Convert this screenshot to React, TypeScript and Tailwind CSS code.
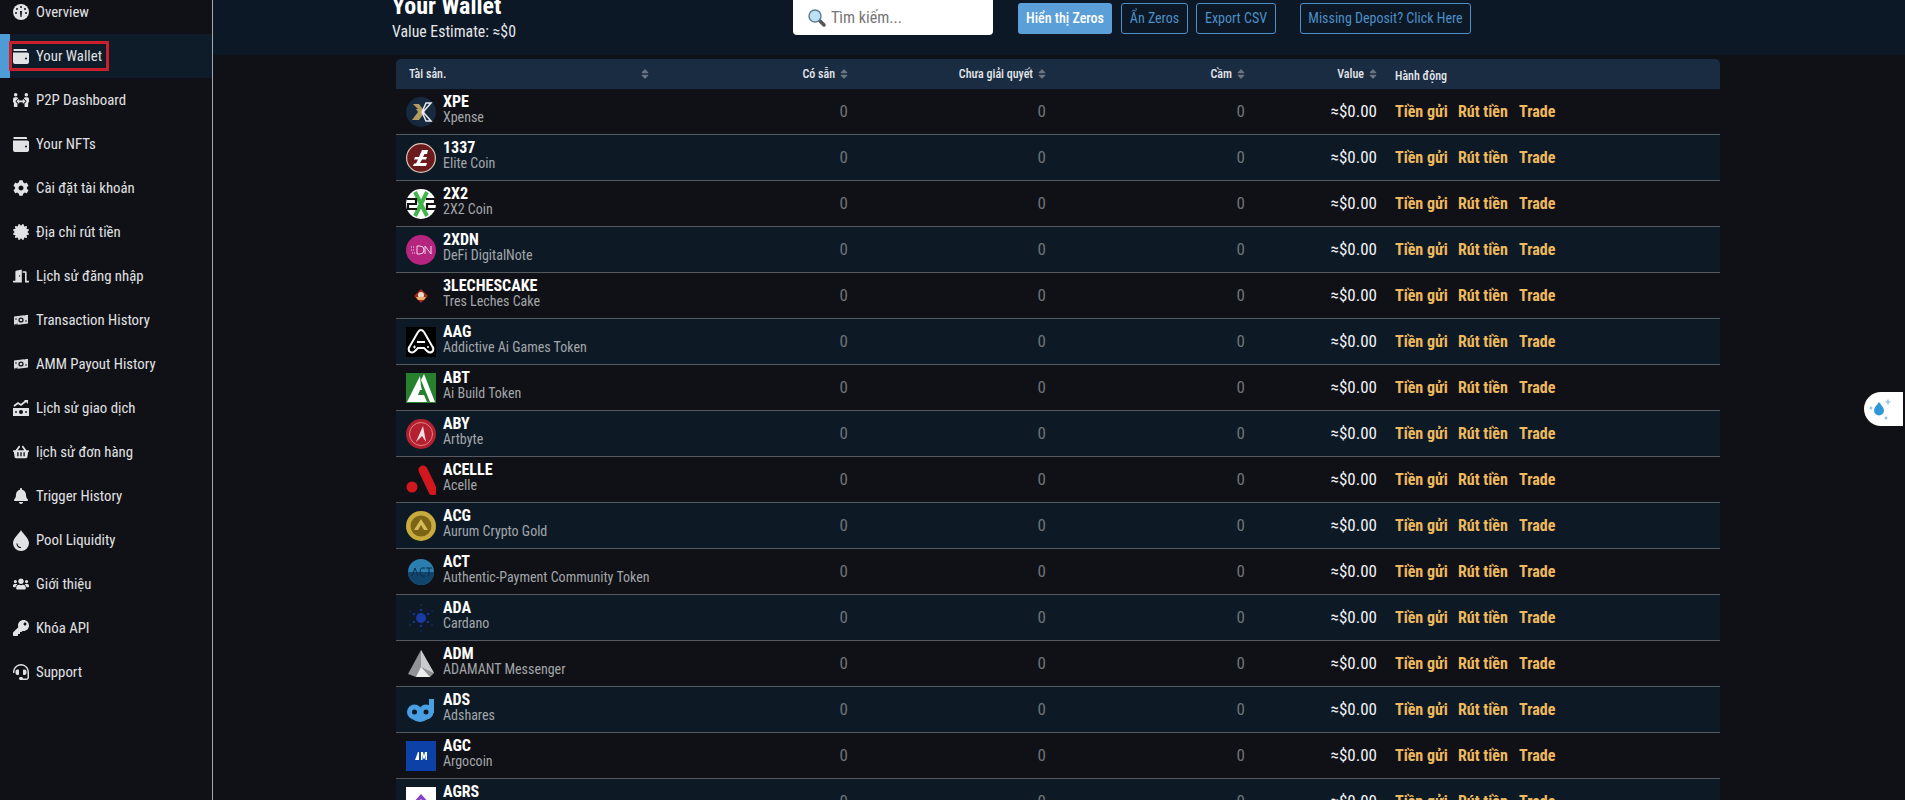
import React from "react";
import { FaCog, FaCertificate, FaDoorOpen, FaShoppingBasket, FaBell, FaUsers, FaKey, FaHeadset, FaPeopleArrows, FaSort } from "react-icons/fa";

const Gauge = () => (
  <svg width="16" height="16" viewBox="0 0 16 16"><circle cx="8" cy="8" r="8" fill="#e1e2e4"/><path d="M7 7h2l-.4 5.500a.6.600 0 01-1.200 0z" fill="#101117"/><circle cx="8" cy="3" r="1" fill="#101117"/><circle cx="4" cy="5" r="1" fill="#101117"/><circle cx="12" cy="5" r="1" fill="#101117"/><circle cx="3" cy="9" r="1" fill="#101117"/><circle cx="13" cy="9" r="1" fill="#101117"/></svg>
);
const Wallet = () => (
  <svg width="16" height="15" viewBox="0 0 16 15"><path d="M2 0h11a1 1 0 011 1v1H1a1 1 0 011-2z" fill="#e1e2e4"/><path d="M0 3.500a1.500 1.500 0 000 0V13a2 2 0 002 2h12a2 2 0 002-2V5a1.500 1.500 0 00-1.500-1.500z" fill="#e1e2e4"/><circle cx="13" cy="9.500" r="1" fill="#101117"/></svg>
);
const Bill = () => (
  <svg width="16" height="12" viewBox="0 0 16 12"><path d="M1 2.500L15 0.800v8.700L1 11.200z" fill="#d8d9db"/><circle cx="8" cy="6" r="2.600" fill="#101117"/><circle cx="8" cy="6" r="1.300" fill="#d8d9db"/><path d="M11 1l4-1M1 11l4-1" stroke="#101117" strokeWidth=".8"/><circle cx="3" cy="5" r=".8" fill="#101117"/><circle cx="13" cy="7" r=".8" fill="#101117"/></svg>
);
const TradeBill = () => (
  <svg width="16" height="16" viewBox="0 0 16 16"><path d="M1 6l4-3 3 2 5-4" fill="none" stroke="#e1e2e4" strokeWidth="1.800"/><path d="M11 0h4v4z" fill="#e1e2e4"/><rect x="0" y="8" width="16" height="8" fill="#e1e2e4"/><circle cx="8" cy="12" r="2" fill="#101117"/><circle cx="3" cy="12" r=".9" fill="#101117"/><circle cx="13" cy="12" r=".9" fill="#101117"/></svg>
);
const Drop = () => (
  <svg width="16" height="21" viewBox="0 0 16 21"><path d="M8 0c1 3 8 8 8 13a8 8 0 01-16 0C0 8 7 3 8 0z" fill="#e1e2e4"/><path d="M4 13.500c0 2.500 2 4 4 4" fill="none" stroke="#101117" strokeWidth="1.200"/></svg>
);

const nav: [React.ReactNode, string][] = [
  [<Gauge />, "Overview"],
  [<Wallet />, "Your Wallet"],
  [<FaPeopleArrows />, "P2P Dashboard"],
  [<Wallet />, "Your NFTs"],
  [<FaCog />, "Cài đặt tài khoản"],
  [<FaCertificate />, "Địa chỉ rút tiền"],
  [<FaDoorOpen />, "Lịch sử đăng nhập"],
  [<Bill />, "Transaction History"],
  [<Bill />, "AMM Payout History"],
  [<TradeBill />, "Lịch sử giao dịch"],
  [<FaShoppingBasket />, "lịch sử đơn hàng"],
  [<FaBell />, "Trigger History"],
  [<Drop />, "Pool Liquidity"],
  [<FaUsers />, "Giới thiệu"],
  [<FaKey />, "Khóa API"],
  [<FaHeadset />, "Support"],
];

const coins: [string, string, React.ReactNode][] = [
  ["XPE", "Xpense", <svg viewBox="0 0 30 30"><circle cx="15" cy="15" r="15" fill="#16293f"/><path d="M7 7h6l6 8-6 8H6l6-8-2-3h2z" fill="#b39b62"/><path d="M25 6l-8 9 8 9h-5l-4-9 4-9z" fill="none" stroke="#e8edf2" strokeWidth="1.500"/></svg>],
  ["1337", "Elite Coin", <svg viewBox="0 0 30 30"><circle cx="15" cy="15" r="14.400" fill="#6b1a1e" stroke="#d9c4b4" strokeWidth="1.200"/><path d="M22 7h-6l-3 7h-4l-1 2.500h4l-2 4H8l-1 2.500h13l1-3h-7l2-3.500h4l1-2.500h-4l1.500-3H21z" fill="#fff"/></svg>],
  ["2X2", "2X2 Coin", <svg viewBox="0 0 30 30"><circle cx="15" cy="15" r="15" fill="#fff"/><path d="M9 3l12 24M21 3L9 27" stroke="#3fb54a" strokeWidth="4"/><path d="M1 10h9v5H2v5h9M20 10h9v5h-8v5h9" fill="none" stroke="#111" strokeWidth="2.200"/></svg>],
  ["2XDN", "DeFi DigitalNote", <svg viewBox="0 0 30 30"><circle cx="15" cy="15" r="15" fill="#b5257f"/><path d="M11 11v8h3a4 4 0 000-8zM19 19v-8l6 8v-8" fill="none" stroke="#f3d7e8" strokeWidth="1"/><path d="M5 12h4M5 15h4M6 18h3" stroke="#f3d7e8" strokeDasharray="1 1"/></svg>],
  ["3LECHESCAKE", "Tres Leches Cake", <svg viewBox="0 0 30 30"><path d="M15 8l7 7-7 7-7-7z" fill="#a3291f"/><circle cx="15" cy="14" r="3" fill="#e8dccb"/><path d="M10 16h10l-2 3h-6z" fill="#e8b06a"/></svg>],
  ["AAG", "Addictive Ai Games Token", <svg viewBox="0 0 30 30"><rect width="30" height="30" fill="#000"/><path d="M3 24q-1-3 1-5L12 5q3-4 6 0l8 14q2 2 1 5-3 3-6 0l-3-3h-6l-3 3q-3 3-6 0z" fill="none" stroke="#fff" strokeWidth="2"/><path d="M11 15h8" stroke="#fff" strokeWidth="2"/><path d="M7 20h3M8.500 18.500v3" stroke="#fff"/><circle cx="22" cy="20" r="1" fill="#fff"/></svg>],
  ["ABT", "Ai Build Token", <svg viewBox="0 0 30 30"><rect width="30" height="30" fill="#26802e"/><path d="M14 3L1 29h20l-3-7H12l2-5 2 0-1-4z" fill="#fff"/><path d="M18 1l11 28h-5L15 7z" fill="#fff"/></svg>],
  ["ABY", "Artbyte", <svg viewBox="0 0 30 30"><circle cx="15" cy="15" r="15" fill="#b3202f"/><circle cx="15" cy="15" r="11.500" fill="none" stroke="#e4808a"/><path d="M17 7l3 16-4-6-6 6z" fill="#f6dfe1"/></svg>],
  ["ACELLE", "Acelle", <svg viewBox="0 0 30 30"><path d="M17 5l10 21" stroke="#d3171f" strokeWidth="9" strokeLinecap="round"/><circle cx="6" cy="22" r="5.500" fill="#d3171f"/></svg>],
  ["ACG", "Aurum Crypto Gold", <svg viewBox="0 0 30 30"><circle cx="15" cy="15" r="15" fill="#c8ab3c"/><circle cx="15" cy="15" r="10.500" fill="#7c6416"/><path d="M15 8l7 11h-4l-3-5-3 5H8z" fill="#d6bb5b"/></svg>],
  ["ACT", "Authentic-Payment Community Token", <svg viewBox="0 0 30 30"><circle cx="15" cy="15" r="13" fill="#2b7fb0"/><path d="M2 15a13 13 0 0026 0z" fill="#12456c"/><path d="M6 19l3-8 3 8M19 11h-3a2 4 0 000 8h3M20 11h6M23 11v8" stroke="#0d2b47" fill="none"/></svg>],
  ["ADA", "Cardano", <svg viewBox="0 0 30 30" fill="#1b3aa3"><circle cx="15" cy="15" r="5"/><g opacity=".8"><circle cx="15" cy="7" r="1.300"/><circle cx="15" cy="23" r="1.300"/><circle cx="8" cy="11" r="1.300"/><circle cx="22" cy="11" r="1.300"/><circle cx="8" cy="19" r="1.300"/><circle cx="22" cy="19" r="1.300"/></g><g opacity=".5"><circle cx="15" cy="2" r=".9"/><circle cx="15" cy="28" r=".9"/><circle cx="4" cy="8" r=".9"/><circle cx="26" cy="8" r=".9"/><circle cx="4" cy="22" r=".9"/><circle cx="26" cy="22" r=".9"/></g></svg>],
  ["ADM", "ADAMANT Messenger", <svg viewBox="0 0 30 30"><path d="M15 1L2 25l8 3h14l4-4z" fill="#8f9297"/><path d="M15 1l13 23-13-6z" fill="#c9cbce"/><path d="M10 28l5-10 9 10z" fill="#eceded"/></svg>],
  ["ADS", "Adshares", <svg viewBox="0 0 30 30"><g fill="none" stroke="#4a9fe3" strokeWidth="5"><circle cx="8.500" cy="17" r="5"/><circle cx="20" cy="17" r="5"/><path d="M25.500 4v14M8 22q6 5 12 0"/></g></svg>],
  ["AGC", "Argocoin", <svg viewBox="0 0 30 30"><rect width="30" height="30" fill="#0c41a8"/><path d="M9 19l3-8h1v8zM15 11h2l1 4 1-4h2v8h-1.500v-5l-1 4h-1l-1-4v5H15z" fill="#fff"/></svg>],
  ["AGRS", "Agoras", <svg viewBox="0 0 30 30"><rect width="30" height="30" fill="#fff"/><path d="M15 7l9 10-3 2-6-7-6 7-3-2z" fill="#8a3fc9"/><path d="M9 23l6-5 6 5z" fill="#c38be8"/></svg>],
];

const head = "text-[12px] text-[#e5e7eb] font-medium";

function Cell({ className, children }: { className?: string; children: React.ReactNode }) {
  return <div className={"pl-1 pr-[4px] flex items-center justify-end " + (className ?? "")}>{children}</div>;
}

const grid = "grid grid-cols-[257px_199px_198px_199px_132px_339px]";
const sort = "text-[#6b7280] ml-[3px] text-[12px] -mr-[2px]";

export default function App() {
  return (
    <div className="w-[1905px] h-[800px] overflow-hidden flex bg-[#101116] [font-family:Roboto,sans-serif] [font-stretch:75%] relative">
      <aside className="w-[213px] shrink-0 border-r border-r-[#a5a8ad] bg-[#101117] -mt-[10px]">
        {nav.map(([icon, label], i) => (
          <div key={label} className={"h-[44px] flex items-center text-[#e1e2e4] text-[14.8px] " + (i === 1 ? "bg-[#0e1b29] border-l-[10px] border-l-[#4e9bd6] pl-[3px]" : "pl-[13px]")}>
            <span className="w-[16px] text-[16px] flex justify-center shrink-0">{icon}</span>
            <span className="ml-[7px] whitespace-nowrap">{label}</span>
          </div>
        ))}
      </aside>
      <main className="flex-1 min-w-0">
        <header className="h-[55px] bg-[#0c1825] flex">
          <div className="w-[183px] ml-[179px] -mt-[8px] shrink-0">
            <h1 className="text-[24px] leading-[28px] font-bold text-white whitespace-nowrap">Your Wallet</h1>
            <p className="text-[15.800px] leading-[24px] text-[#e5e7eb] whitespace-nowrap">Value Estimate: ≈$0</p>
          </div>
          <div className="w-[200px] h-[35px] ml-[218px] bg-white rounded-b-[4px] flex items-center pl-[14px] shrink-0">
            <svg width="20" height="20" viewBox="0 0 20 20" className="shrink-0"><path d="M11 11l6 6" stroke="#555" strokeWidth="3.500" strokeLinecap="round"/><circle cx="8" cy="8" r="6" fill="#bfe0f5" stroke="#5f7f99" strokeWidth="1.500"/></svg>
            <span className="ml-[4px] text-[16px] text-[#757575]">Tìm kiếm...</span>
          </div>
          <div className="flex items-start pt-[3px] ml-[25px] text-[14px]">
            <button className="w-[94px] h-[31px] rounded-[3px] bg-[#5a9fd8] text-white font-medium">Hiển thị Zeros</button>
            <button className="w-[67px] h-[31px] ml-[9px] rounded-[3px] border border-[#4d8fc7] text-[#4d8fc7]">Ẩn Zeros</button>
            <button className="w-[80px] h-[31px] ml-[8px] rounded-[3px] border border-[#4d8fc7] text-[#4d8fc7]">Export CSV</button>
            <button className="w-[171px] h-[31px] ml-[24px] rounded-[3px] border border-[#4d8fc7] text-[#4d8fc7]">Missing Deposit? Click Here</button>
          </div>
        </header>
        <section className="ml-[183px] w-[1324px] mt-[4px]">
          <div className={grid + " h-[30px] bg-[#1a2c42] rounded-t-[5px] " + head}>
            <Cell className="!justify-between !pl-[13px]"><span>Tài sản.</span><FaSort className={sort} /></Cell>
            <Cell>Có sẵn<FaSort className={sort} /></Cell>
            <Cell>Chưa giải quyết<FaSort className={sort} /></Cell>
            <Cell>Cầm<FaSort className={sort} /></Cell>
            <Cell>Value<FaSort className={sort} /></Cell>
            <Cell className="!justify-start !pl-[14px] pt-[3px]">Hành động</Cell>
          </div>
          {coins.map(([sym, name, logo], i) => (
            <div key={sym} className={grid + " h-[46px] border-b border-b-[#555a60] " + (i % 2 ? "bg-[#0d1a26]" : "bg-[#101116]")}>
              <div className="flex items-center pl-[10px]">
                <span className="w-[30px] h-[30px] shrink-0 block">{logo}</span>
                <div className="ml-[7px] whitespace-nowrap pb-[3px]">
                  <div className="text-[16px] leading-[16px] font-bold text-white">{sym}</div>
                  <div className="text-[14px] leading-[15.500px] text-[#a3a6aa]">{name}</div>
                </div>
              </div>
              <Cell className="text-[17px] text-[#6f7378]">0</Cell>
              <Cell className="text-[17px] text-[#6f7378]">0</Cell>
              <Cell className="text-[17px] text-[#6f7378]">0</Cell>
              <Cell className="text-[17px] text-[#f3f4f6]">≈$0.00</Cell>
              <div className="flex items-center pl-[14px] text-[16px] font-bold text-[#eeb95f] whitespace-nowrap">
                <span className="w-[63px]">Tiền gửi</span>
                <span className="w-[61px]">Rút tiền</span>
                <span>Trade</span>
              </div>
            </div>
          ))}
        </section>
      </main>
      <div className="absolute left-[9px] top-[41px] w-[100px] h-[30px] border-[3px] border-[#c9202c]" />
      <div className="absolute left-[1864px] top-[392px] w-[39px] h-[34px] bg-white rounded-l-[17px]">
        <svg width="39" height="34" viewBox="0 0 39 34"><path d="M15 10c3 4 5 6 5 8.500a5 5 0 01-10 0c0-2.500 2-4.500 5-8.500z" fill="#2f97d8"/><path d="M24 7.500v5M21.500 10h5M7 14.500v3M5.500 16h3M22 24.500v3M20.500 26h3" stroke="#7db8e0" strokeWidth="1.200"/></svg>
      </div>
    </div>
  );
}
